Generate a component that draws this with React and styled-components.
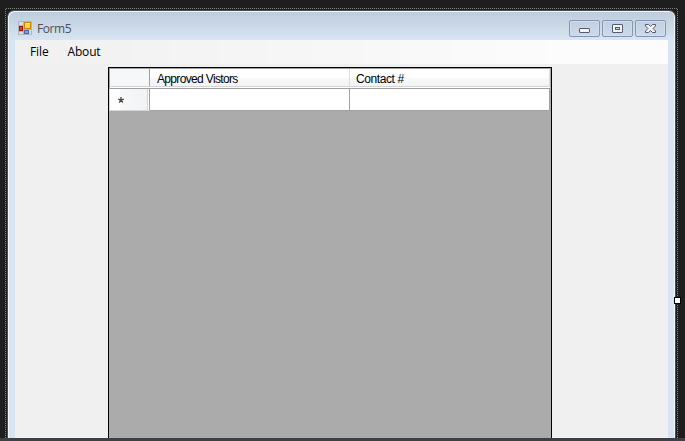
import React from "react";
import styled, { createGlobalStyle } from "styled-components";

const GlobalStyle = createGlobalStyle`
  * { box-sizing: border-box; }
  body { margin: 0; background: #1e1e1e; overflow: hidden; }
`;

const Designer = styled.main`
  position: relative;
  width: 685px;
  height: 441px;
  padding: 10px 9px 0 7px;
  display: flex;
  flex-direction: column;
  background: #1e1e1e;
  overflow: hidden;
`;

const SelectionOutline = styled.svg`
  position: absolute;
  left: 0;
  top: 0;
  pointer-events: none;
`;

const FormWindow = styled.section`
  flex: 1;
  min-height: 0;
  display: flex;
  flex-direction: column;
  padding: 0 7px;
  border: 1px solid #4a4c50;
  border-bottom: 0;
  border-radius: 7px 7px 0 0;
  background: linear-gradient(#bdccdb 0, #d7e4f2 29px, #d7e4f2 100%);
  box-shadow: inset 1px 1px 0 #f1f6fb, inset -1px 0 0 #f1f6fb;
`;

const TitleBar = styled.header`
  height: 29px;
  flex: none;
  display: flex;
  align-items: flex-start;
  padding: 9px 2px 0 3px;
`;

const AppIcon = styled.svg`
  margin-top: 1px;
  flex: none;
`;

const Title = styled.span`
  flex: 1;
  margin: 1px 0 0 5px;
  font: 12px/15px "Open Sans", "Noto Sans", sans-serif;
  letter-spacing: -0.45px;
  color: #4c5058;
`;

const Controls = styled.div`
  display: flex;
  gap: 2px;
`;

const ControlButton = styled.button`
  width: 31px;
  height: 17px;
  padding: 0;
  display: flex;
  border: 1px solid #8496b4;
  border-radius: 2px;
  background: linear-gradient(#c0cfdf, #cddae9);
  box-shadow: inset 0 0 0 1px #d0ddea;
`;

const Client = styled.div`
  flex: 1;
  min-height: 0;
  display: flex;
  flex-direction: column;
  background: #f0f0f0;
`;

const MenuBar = styled.nav`
  height: 24px;
  flex: none;
  display: flex;
  gap: 19px;
  padding: 3px 0 0 15px;
  background: linear-gradient(90deg, #f0f0f0, #fcfcfc 85%);
`;

const MenuItem = styled.span`
  font: 12px/17px "Open Sans", "Noto Sans", sans-serif;
  letter-spacing: ${(p) => p.$tracking};
  color: #000;
`;

const DataGrid = styled.div`
  flex: 1;
  margin: 3px 0 0 93px;
  width: 444px;
  border: 1px solid #000;
  border-bottom: 0;
  background: #ababab;
`;

const GridRow = styled.div`
  display: grid;
  grid-template-columns: 41px 200px 200px;
  height: ${(p) => p.$height}px;
`;

const HeaderCell = styled.div`
  padding: 3px 0 0 ${(p) => p.$inset || 0}px;
  border: solid #a0a0a0;
  border-width: 1px 0 1px ${(p) => (p.$corner ? 1 : 0)}px;
  background: linear-gradient(#fff 0, #fff 45%, #f7f8fa 46%, #f1f2f4 100%);
  ${(p) => p.$corner && "background: #f6f7f9;"}
  box-shadow: inset 0 -1px 0 #fff, inset 0 -2px 0 #d5d5d5,
    inset -1px 0 0 ${(p) => (p.$corner ? "#a0a0a0" : "#dedfe1")};
  font: 12px/15px "Liberation Sans", Arial, sans-serif;
  letter-spacing: ${(p) => p.$tracking || "0"};
  color: #000;
  white-space: nowrap;
`;

const RowHeader = styled.div`
  display: flex;
  align-items: center;
  padding-left: 8px;
  background: linear-gradient(90deg, #fff 0, #fff 25%, #f7f8fa 26%, #f1f2f4 100%);
  border-left: 1px solid #d5d5d5;
  border-right: 1px solid #a0a0a0;
  border-bottom: 1px solid #d5d5d5;
  box-shadow: inset -1px 0 0 #fff, inset -2px 0 0 #d5d5d5;
`;

const Cell = styled.div`
  background: #fff;
  border-right: 1px solid #a0a0a0;
  border-bottom: 1px solid #a0a0a0;
`;

const BottomEdge = styled.footer`
  height: 3px;
  flex: none;
  margin: 0 -9px 0 -7px;
  background: #3f3f46;
`;

const ResizeHandle = styled.div`
  position: absolute;
  left: 674px;
  top: 297px;
  width: 7px;
  height: 7px;
  background: #fff;
  border: 1px solid #000;
`;

function FormIcon() {
  return (
    <AppIcon width="14" height="14" viewBox="0 0 14 14">
      <path d="M.5.5h13v13H.5zM5.5.5v13M.5 4.5h5M.5 10.5h5M5.5 8.5h8" fill="#d4dce4" stroke="#b5b5b5" />
      <rect x="1.5" y="5.5" width="3" height="4" fill="#d94632" stroke="#9d1710" />
      <rect x="6.5" y="1.5" width="6" height="6" fill="#ffd347" stroke="#c48708" />
      <path d="M7 2.5h5" stroke="#ffe99b" />
      <rect x="6.5" y="9.5" width="4" height="3" fill="#74a5ef" stroke="#4169bb" />
    </AppIcon>
  );
}

function MinimizeGlyph() {
  return (
    <svg width="29" height="15">
      <rect x="9.5" y="7.5" width="10" height="4" rx=".5" fill="#f3f3f3" stroke="#555b70" />
    </svg>
  );
}

function MaximizeGlyph() {
  return (
    <svg width="29" height="15">
      <rect x="9.5" y="3.5" width="10" height="8" rx=".5" fill="#f3f3f3" stroke="#555b70" />
      <rect x="12.5" y="6.5" width="4" height="2" fill="#c7d5e5" stroke="#555b70" />
    </svg>
  );
}

function CloseGlyph() {
  return (
    <svg width="29" height="15">
      <path
        d="M9.5 3.5h3l2 2 2-2h3v1.5L17 7.5l2.5 2.5v1.5h-3l-2-2-2 2h-3V10L12 7.5 9.5 5z"
        fill="#f3f3f3"
        stroke="#555b70"
      />
    </svg>
  );
}

export default function App() {
  return (
    <>
      <GlobalStyle />
      <Designer>
        <FormWindow>
          <TitleBar>
            <FormIcon />
            <Title>Form5</Title>
            <Controls>
              <ControlButton aria-label="Minimize"><MinimizeGlyph /></ControlButton>
              <ControlButton aria-label="Maximize"><MaximizeGlyph /></ControlButton>
              <ControlButton aria-label="Close"><CloseGlyph /></ControlButton>
            </Controls>
          </TitleBar>
          <Client>
            <MenuBar>
              <MenuItem $tracking="-0.1px">File</MenuItem>
              <MenuItem $tracking="-0.2px">About</MenuItem>
            </MenuBar>
            <DataGrid>
              <GridRow $height={21}>
                <HeaderCell $corner />
                <HeaderCell $inset={7} $tracking="-0.66px">Approved Vistors</HeaderCell>
                <HeaderCell $inset={6} $tracking="-0.4px">Contact #</HeaderCell>
              </GridRow>
              <GridRow $height={22}>
                <RowHeader>
                  <svg width="6" height="6" viewBox="0 0 6 6">
                    <path d="M3 0v4M.2 2.2 3 3.2l2.8-1M1.2 5.6 3 3.2l1.8 2.4" fill="none" stroke="#444" strokeWidth="1.3" />
                  </svg>
                </RowHeader>
                <Cell />
                <Cell />
              </GridRow>
            </DataGrid>
          </Client>
        </FormWindow>
        <BottomEdge />
        <SelectionOutline width="685" height="438">
          <path d="M5.5 438V8.5H677.5V438" fill="none" stroke="#858585" strokeDasharray="1 1" />
        </SelectionOutline>
        <ResizeHandle />
      </Designer>
    </>
  );
}
